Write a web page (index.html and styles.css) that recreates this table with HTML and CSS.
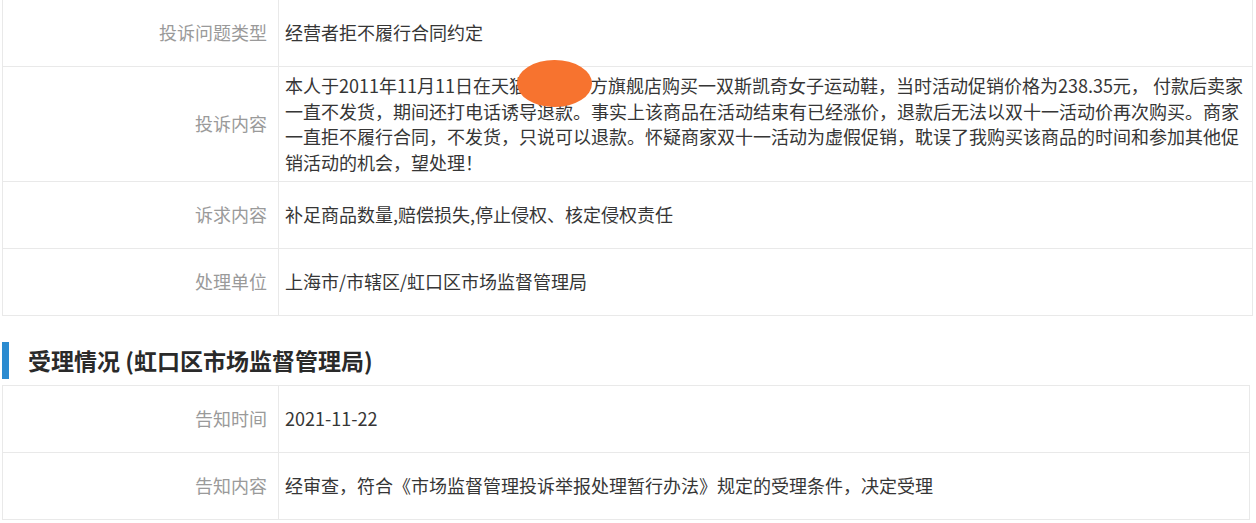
FILE: index.html
```html
<!DOCTYPE html>
<html lang="zh-CN">
<head>
<meta charset="utf-8">
<title>投诉详情</title>
<link rel="stylesheet" href="styles.css">
</head>
<body>
<div class="page">
  <table class="info info-main">
    <colgroup><col class="col-label"><col class="col-value"></colgroup>
    <tr>
      <td class="label">投诉问题类型</td>
      <td class="value">经营者拒不履行合同约定</td>
    </tr>
    <tr>
      <td class="label">投诉内容</td>
      <td class="value">本人于2011年11月11日在天<span class="redact">猫××官</span>方旗舰店购买一双斯凯奇女子运动鞋，当时活动促销价格为238.35元， 付款后卖家<br>一直不发货，期间还打电话诱导退款。事实上该商品在活动结束有已经涨价，退款后无法以双十一活动价再次购买。商家<br>一直拒不履行合同，不发货，只说可以退款。怀疑商家双十一活动为虚假促销，耽误了我购买该商品的时间和参加其他促<br>销活动的机会，望处理！</td>
    </tr>
    <tr>
      <td class="label">诉求内容</td>
      <td class="value">补足商品数量,赔偿损失,停止侵权、核定侵权责任</td>
    </tr>
    <tr>
      <td class="label">处理单位</td>
      <td class="value">上海市/市辖区/虹口区市场监督管理局</td>
    </tr>
  </table>

  <h2 class="section-title">受理情况 (虹口区市场监督管理局)</h2>

  <table class="info info-second">
    <colgroup><col class="col-label"><col class="col-value"></colgroup>
    <tr>
      <td class="label">告知时间</td>
      <td class="value">2021-11-22</td>
    </tr>
    <tr>
      <td class="label">告知内容</td>
      <td class="value">经审查，符合《市场监督管理投诉举报处理暂行办法》规定的受理条件，决定受理</td>
    </tr>
  </table>
</div>
</body>
</html>
```

FILE: styles.css
```css
html, body {
  margin: 0;
  padding: 0;
  background: #ffffff;
}

body {
  font-family: "Noto Sans CJK SC", "Microsoft YaHei", "Noto Sans", sans-serif;
  color: #333333;
}

.page {
  padding: 0 0 0 2px;
}

.info {
  border-collapse: collapse;
  table-layout: fixed;
  font-size: 18px;
  line-height: 25.5px;
}

.info-main {
  width: 1251px;
  margin-top: -1px;
}

.info-second {
  width: 1248px;
}

.col-label {
  width: 276px;
}

.info td {
  border: 1px solid #e9e9e9;
  height: 67px;
  box-sizing: border-box;
  padding: 6px 6px;
  vertical-align: middle;
}

.info td.label {
  text-align: right;
  padding-right: 11px;
  color: #9a9a9a;
}

.info td.value {
  color: #363636;
  white-space: nowrap;
}

.redact {
  position: relative;
  padding: 0 9px 0 0;
}

.redact::after {
  content: "";
  position: absolute;
  left: 8px;
  top: -12px;
  width: 75px;
  height: 47px;
  border-radius: 38px / 24px;
  background: #f7732f;
}

.section-title {
  margin: 26px 0 6px 0;
  height: 37px;
  border-left: 7px solid #2b8bd0;
  padding-left: 19px;
  font-size: 23px;
  line-height: 37px;
  font-weight: bold;
  color: #2a2a2a;
}
```
